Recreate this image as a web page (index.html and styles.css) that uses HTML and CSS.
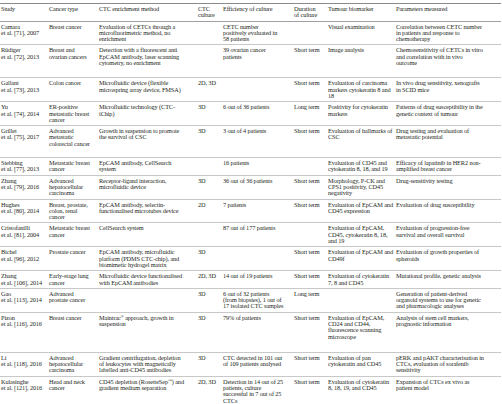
FILE: index.html
```html
<!DOCTYPE html>
<html>
<head>
<meta charset="utf-8">
<link rel="stylesheet" href="styles.css">
</head>
<body>
<table class="ctc">
<colgroup>
<col class="c-study"><col class="c-type"><col class="c-method"><col class="c-culture"><col class="c-eff"><col class="c-dur"><col class="c-bio"><col class="c-param">
</colgroup>
<thead>
<tr><th>Study</th><th>Cancer type</th><th>CTC enrichment method</th><th>CTC<br>culture</th><th>Efficiency of culture</th><th>Duration<br>of culture</th><th>Tumour biomarker</th><th>Parameters measured</th></tr>
</thead>
<tbody>
<tr><td>Camara<br>et al. [71], 2007</td><td>Breast cancer</td><td>Evaluation of CETCs through a<br>microfluorimetric method, no<br>enrichment</td><td></td><td>CETC number<br>positively evaluated in<br>58 patients</td><td></td><td>Visual examination</td><td>Correlation between CETC number<br>in patients and response to<br>chemotherapy</td></tr>
<tr class="gap-9"><td>Rüdiger<br>et al. [72], 2013</td><td>Breast and<br>ovarian cancers</td><td>Detection with a fluorescent anti<br>EpCAM antibody, laser scanning<br>cytometry, no enrichment</td><td></td><td>39 ovarian cancer<br>patients</td><td>Short term</td><td>Image analysis</td><td>Chemosensitivity of CETCs in vitro<br>and correlation with in vivo<br>outcome</td></tr>
<tr><td>Gallant<br>et al. [73], 2013</td><td>Colon cancer</td><td>Microfluidic device (flexible<br>microspring array device, FMSA)</td><td>2D, 3D</td><td></td><td>Short term</td><td>Evaluation of carcinoma<br>markers cytokeratin 8 and<br>18</td><td>In vivo drug sensitivity, xenografts<br>in SCID mice</td></tr>
<tr><td>Yu<br>et al. [74], 2014</td><td>ER-positive<br>metastatic breast<br>cancer</td><td>Microfluidic technology (CTC-<br>iChip)</td><td>3D</td><td>6 out of 36 patients</td><td>Long term</td><td>Positivity for cytokeratin<br>markers</td><td>Patterns of drug susceptibility in the<br>genetic context of tumour</td></tr>
<tr class="gap-8"><td>Grillet<br>et al. [75], 2017</td><td>Advanced<br>metastatic<br>colorectal cancer</td><td>Growth in suspension to promote<br>the survival of CSC</td><td>3D</td><td>3 out of 4 patients</td><td>Short term</td><td>Evaluation of hallmarks of<br>CSC</td><td>Drug testing and evaluation of<br>metastatic potential</td></tr>
<tr><td>Stebbing<br>et al. [77], 2013</td><td>Metastatic breast<br>cancer</td><td>EpCAM antibody, CellSearch<br>system</td><td></td><td>16 patients</td><td></td><td>Evaluation of CD45 and<br>cytokeratin 8, 18, and 19</td><td>Efficacy of lapatinib in HER2 non-<br>amplified breast cancer</td></tr>
<tr><td>Zhang<br>et al. [79], 2016</td><td>Advanced<br>hepatocellular<br>carcinoma</td><td>Receptor-ligand interaction,<br>microfluidic device</td><td>3D</td><td>36 out of 36 patients</td><td>Short term</td><td>Morphology, P-CK and<br>CPS1 positivity, CD45<br>negativity</td><td>Drug-sensitivity testing</td></tr>
<tr><td>Hughes<br>et al. [80], 2014</td><td>Breast, prostate,<br>colon, renal<br>cancer</td><td>EpCAM antibody, selectin-<br>functionalised microtubes device</td><td>2D</td><td>7 patients</td><td>Short term</td><td>Evaluation of EpCAM and<br>CD45 expression</td><td>Evaluation of drug susceptibility</td></tr>
<tr><td>Cristofanilli<br>et al. [81], 2004</td><td>Metastatic breast<br>cancer</td><td>CellSearch system</td><td></td><td>87 out of 177 patients</td><td></td><td>Evaluation of EpCAM,<br>CD45, cytokeratin 8, 18,<br>and 19</td><td>Evaluation of progression-free<br>survival and overall survival</td></tr>
<tr><td>Bichel<br>et al. [96], 2012</td><td>Prostate cancer</td><td>EpCAM antibody, microfluidic<br>platform (PDMS CTC-chip), and<br>biomimetic hydrogel matrix</td><td>3D</td><td></td><td>Short term</td><td>Evaluation of EpCAM and<br>CD49f</td><td>Evaluation of growth properties of<br>spheroids</td></tr>
<tr><td>Zhang<br>et al. [106], 2014</td><td>Early-stage lung<br>cancer</td><td>Microfluidic device functionalised<br>with EpCAM antibodies</td><td>2D, 3D</td><td>14 out of 19 patients</td><td>Short term</td><td>Evaluation of cytokeratin<br>7, 8 and CD45</td><td>Mutational profile, genetic analysis</td></tr>
<tr><td>Gao<br>et al. [113], 2014</td><td>Advanced<br>prostate cancer</td><td></td><td>3D</td><td>6 out of 32 patients<br>(from biopsies), 1 out of<br>17 isolated CTC samples</td><td>Long term</td><td></td><td>Generation of patient-derived<br>organoid systems to use for genetic<br>and pharmacologic analyses</td></tr>
<tr class="gap-10"><td>Pizon<br>et al. [116], 2016</td><td>Breast cancer</td><td>Maintrac<sup>®</sup> approach, growth in<br>suspension</td><td>3D</td><td>79% of patients</td><td>Short term</td><td>Evaluation of EpCAM,<br>CD24 and CD44,<br>fluorescence scanning<br>microscope</td><td>Analysis of stem cell markers,<br>prognostic information</td></tr>
<tr><td>Li<br>et al. [118], 2016</td><td>Advanced<br>hepatocellular<br>carcinoma</td><td>Gradient centrifugation, depletion<br>of leukocytes with magnetically<br>labelled anti-CD45 antibodies</td><td>3D</td><td>CTC detected in 101 out<br>of 109 patients analysed</td><td>Short term</td><td>Evaluation of pan<br>cytokeratin and CD45</td><td>pERK and pAKT characterisation in<br>CTCs, evaluation of sorafenib<br>sensitivity</td></tr>
<tr class="gap-2"><td>Kulasinghe<br>et al. [121], 2016</td><td>Head and neck<br>cancer</td><td>CD45 depletion (RosetteSep<sup>™</sup>) and<br>gradient medium separation</td><td>2D, 3D</td><td>Detection in 14 out of 25<br>patients, culture<br>successful in 7 out of 25<br>CTCs</td><td>Short term</td><td>Evaluation of cytokeratin<br>8, 18, 19, and CD45</td><td>Expansion of CTCs ex vivo as<br>patient model</td></tr>
</tbody>
</table>
</body>
</html>
```
FILE: styles.css
```css
html, body {
  margin: 0;
  padding: 0;
  background: #ffffff;
}
body {
  padding-top: 3px;
}
.ctc {
  width: 501px;
  border-collapse: collapse;
  table-layout: fixed;
  font-family: "Liberation Serif", "Times New Roman", serif;
  font-size: 6.3px;
  line-height: 6.3px;
  letter-spacing: -0.12px;
  color: #231f20;
}
.c-study { width: 48px; }
.c-type { width: 50px; }
.c-method { width: 99px; }
.c-culture { width: 25px; }
.c-eff { width: 71px; }
.c-dur { width: 34px; }
.c-bio { width: 68px; }
.c-param { width: 106px; }
.ctc th,
.ctc td {
  text-align: left;
  vertical-align: top;
  font-weight: normal;
  padding: 2px 1px 2px 1px;
  white-space: nowrap;
  overflow: hidden;
}
.ctc thead tr {
  border-top: 1px solid #8a8a8a;
  border-bottom: 1px solid #a0a0a0;
}
.ctc tbody tr {
  border-bottom: 1px solid #c8c8c8;
}
.ctc tbody tr:last-child {
  border-bottom: 1px solid #8a8a8a;
}
.ctc .gap-2 td { padding-bottom: 4px; }
.ctc .gap-8 td { padding-bottom: 10px; }
.ctc .gap-9 td { padding-bottom: 11px; }
.ctc .gap-10 td { padding-bottom: 12px; }
.ctc sup {
  font-size: 4px;
  line-height: 0;
  vertical-align: 2px;
}
```
